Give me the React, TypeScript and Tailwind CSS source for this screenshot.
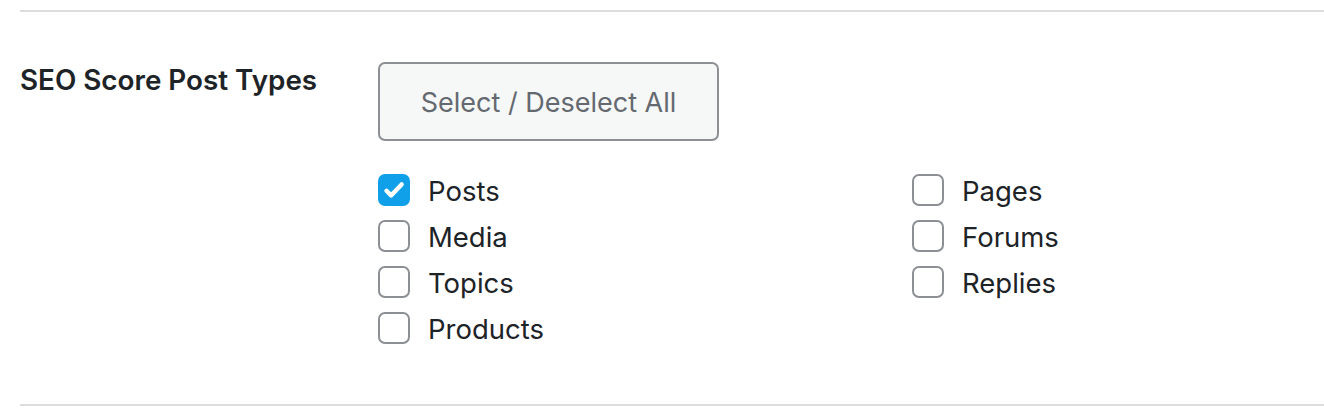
import React, { useState } from 'react';

const postTypes = [
  { key: 'post', label: 'Posts' },
  { key: 'page', label: 'Pages' },
  { key: 'attachment', label: 'Media' },
  { key: 'forum', label: 'Forums' },
  { key: 'topic', label: 'Topics' },
  { key: 'reply', label: 'Replies' },
  { key: 'product', label: 'Products' },
];

function Checkbox({ checked, onChange, label }: { checked: boolean; onChange: () => void; label: string }) {
  return (
    <label className="flex items-center h-[46px] cursor-pointer select-none">
      <span
        onClick={onChange}
        className={
          checked
            ? 'flex items-center justify-center w-[32px] h-[32px] rounded-[7px] bg-[#10a0ea] shrink-0'
            : 'flex items-center justify-center w-[32px] h-[32px] rounded-[7px] border-2 border-[#8c8f94] bg-white shrink-0'
        }
      >
        {checked && (
          <svg width="24" height="24" viewBox="0 0 24 24" fill="none">
            <path d="M4.5 12.8l4.6 4.6L19.6 6.4" stroke="white" strokeWidth="4.4" strokeLinecap="round" strokeLinejoin="round" />
          </svg>
        )}
      </span>
      <span className="ml-[18px] pt-[3px] text-[27.5px] text-[#1d2327]">{label}</span>
    </label>
  );
}

export default function App() {
  const [selected, setSelected] = useState<Record<string, boolean>>({ post: true });

  const toggle = (key: string) => setSelected((s) => ({ ...s, [key]: !s[key] }));
  const toggleAll = () => {
    const all = postTypes.every((t) => selected[t.key]);
    const next: Record<string, boolean> = {};
    postTypes.forEach((t) => (next[t.key] = !all));
    setSelected(next);
  };

  return (
    <div className="bg-white w-[1324px] h-[414px] pl-[20px] pt-[10px] font-['Inter',sans-serif] antialiased">
      <div className="border-t-2 border-[#dcdcde] flex pt-[50px] pb-[53px] border-b-2">
        <div className="w-[358px] shrink-0 text-[27.8px] font-semibold text-[#1d2327] leading-[36px]">
          SEO Score Post Types
        </div>
        <div className="flex flex-col">
          <button
            onClick={toggleAll}
            className="w-[341px] h-[79px] pt-[3px] rounded-[7px] border-2 border-[#8c8f94] bg-[#f6f7f7] text-[27px] text-[#646970]"
          >
            Select / Deselect All
          </button>
          <div className="grid grid-cols-[534px_auto] mt-[26px]">
            {postTypes.map((t) => (
              <Checkbox key={t.key} label={t.label} checked={!!selected[t.key]} onChange={() => toggle(t.key)} />
            ))}
          </div>
        </div>
      </div>
    </div>
  );
}
